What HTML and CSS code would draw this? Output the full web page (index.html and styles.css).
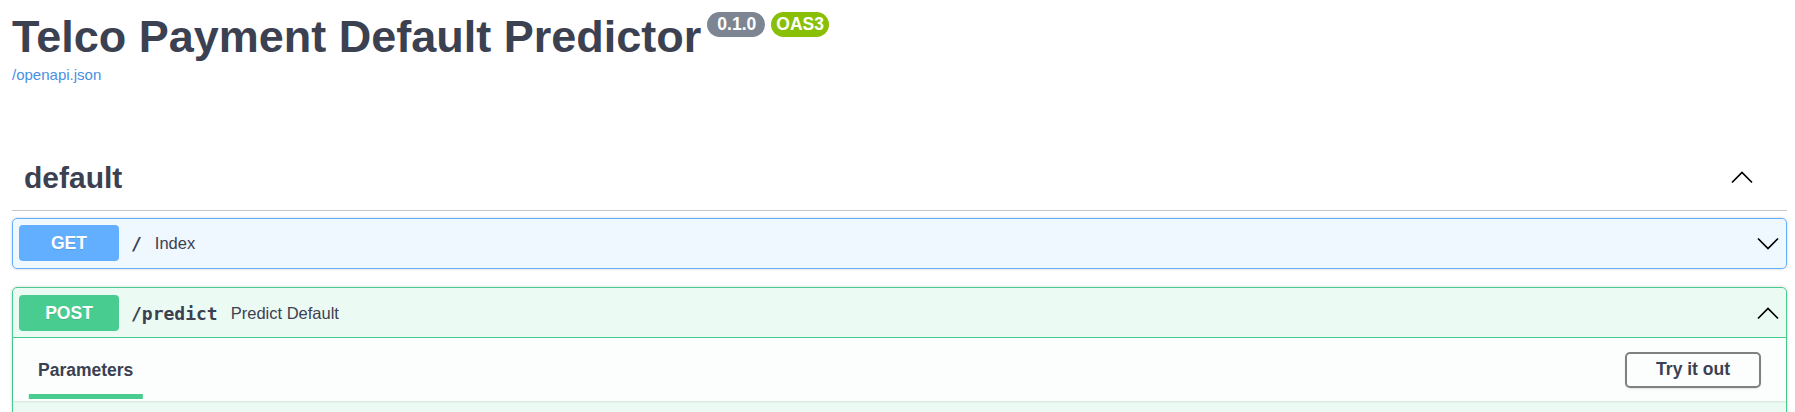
FILE: index.html
```html
<!DOCTYPE html>
<html lang="en">
<head>
<meta charset="utf-8">
<title>Telco Payment Default Predictor</title>
<link rel="stylesheet" href="styles.css">
</head>
<body>
<div class="page">
  <div class="info">
    <h2 class="title">Telco Payment Default Predictor<span class="badge badge-version">0.1.0</span><span class="badge badge-oas">OAS3</span></h2>
    <a class="spec-link" href="#">/openapi.json</a>
  </div>
  <div class="tag-section">
    <div class="tag-header">
      <h3 class="tag-name">default</h3>
      <svg class="arrow tag-arrow" width="22" height="13" viewBox="0 0 22 13"><polyline points="1,11.5 11,1.5 21,11.5"/></svg>
    </div>
    <div class="opblock opblock-get">
      <div class="summary summary-get">
        <span class="method method-get">GET</span>
        <span class="path">/</span>
        <span class="desc">Index</span>
        <svg class="arrow" width="22" height="13" viewBox="0 0 22 13"><polyline points="1,1.5 11,11.5 21,1.5"/></svg>
      </div>
    </div>
    <div class="opblock opblock-post">
      <div class="summary summary-post">
        <span class="method method-post">POST</span>
        <span class="path">/predict</span>
        <span class="desc">Predict Default</span>
        <svg class="arrow" width="22" height="13" viewBox="0 0 22 13"><polyline points="1,11.5 11,1.5 21,11.5"/></svg>
      </div>
      <div class="section-header">
        <div class="tab-list"><h4 class="tab-item">Parameters</h4></div>
        <button class="btn" type="button">Try it out</button>
      </div>
      <div class="opblock-body"></div>
    </div>
  </div>
</div>
</body>
</html>
```

FILE: styles.css
```css
html, body {
  margin: 0;
  padding: 0;
  overflow: hidden;
  background: #fff;
}

body {
  font-family: "Liberation Sans", Arial, sans-serif;
  color: #3b4151;
}

.page {
  padding: 11px 8px 0 12px;
}

.title {
  display: flex;
  align-items: flex-start;
  margin: 0;
  font-size: 45px;
  line-height: 52px;
  font-weight: 700;
  color: #3b4151;
}

.badge {
  margin: 1px 0 0 6px;
  height: 25px;
  line-height: 25px;
  border-radius: 57px;
  font-size: 17.5px;
  font-weight: 700;
  color: #fff;
}

.badge-version {
  background: #7d8492;
  padding: 0 9px 0 10px;
}

.badge-oas {
  background: #89bf04;
  padding: 0 5px;
}

.spec-link {
  display: block;
  margin-top: 3px;
  font-size: 15px;
  line-height: 17px;
  color: #4990e2;
  text-decoration: none;
  width: max-content;
}

.tag-section {
  margin-top: 62px;
}

.tag-header {
  display: flex;
  align-items: center;
  min-height: 41px;
  padding: 12px 0 12px 12px;
  border-bottom: 1px solid rgba(59, 65, 81, 0.3);
  margin-bottom: 7px;
}

.tag-name {
  flex: 1;
  margin: 0;
  font-size: 30px;
  line-height: 34px;
  font-weight: 700;
  color: #3b4151;
}

.arrow {
  flex: none;
  display: block;
}

.arrow polyline {
  fill: none;
  stroke: #000;
  stroke-width: 1.7;
}

.tag-arrow {
  margin-right: 34px;
}

.opblock {
  border: 1px solid;
  border-radius: 5px;
  margin-bottom: 18px;
  box-shadow: 0 0 3px rgba(0, 0, 0, 0.19);
}

.opblock-get {
  background: rgba(97, 175, 254, 0.1);
  border-color: #61affe;
}

.opblock-post {
  background: rgba(73, 204, 144, 0.1);
  border-color: #49cc90;
}

.summary {
  display: flex;
  align-items: center;
}

.summary-get {
  padding: 6px 6px 7px 6px;
}

.summary-post {
  padding: 7px 6px 6px 6px;
  border-bottom: 1px solid #49cc90;
}

.method {
  flex: none;
  width: 100px;
  height: 36px;
  line-height: 36px;
  text-align: center;
  border-radius: 4px;
  font-size: 17.5px;
  font-weight: 700;
  color: #fff;
  text-shadow: 0 1px 0 rgba(0, 0, 0, 0.1);
}

.method-get {
  background: #61affe;
}

.method-post {
  background: #49cc90;
}

.path {
  padding: 0 13px 0 12px;
  font-family: "DejaVu Sans Mono", "Liberation Mono", monospace;
  font-size: 18px;
  font-weight: 700;
  color: #3b4151;
}

.desc {
  flex: 1;
  font-size: 16.5px;
  color: #3b4151;
}

.summary .arrow {
  margin-right: 1px;
}

.section-header {
  display: flex;
  align-items: center;
  min-height: 43px;
  padding: 10px 25px;
  background: rgba(255, 255, 255, 0.8);
  box-shadow: 0 1px 2px rgba(0, 0, 0, 0.1);
}

.tab-list {
  flex: 1;
  display: flex;
}

.tab-item {
  position: relative;
  margin: 0;
  font-size: 17.5px;
  line-height: 20px;
  font-weight: 700;
  color: #3b4151;
}

.tab-item::after {
  content: "";
  position: absolute;
  left: 50%;
  bottom: -19px;
  width: 120%;
  height: 5px;
  transform: translateX(-50%);
  background: #49cc90;
}

.btn {
  height: 36px;
  padding: 0 29px;
  border: 2px solid #808080;
  border-radius: 5px;
  background: transparent;
  box-shadow: 0 1px 2px rgba(0, 0, 0, 0.1);
  font-family: "Liberation Sans", Arial, sans-serif;
  font-size: 17.5px;
  font-weight: 700;
  color: #3b4151;
}

.opblock-body {
  height: 90px;
}
```
